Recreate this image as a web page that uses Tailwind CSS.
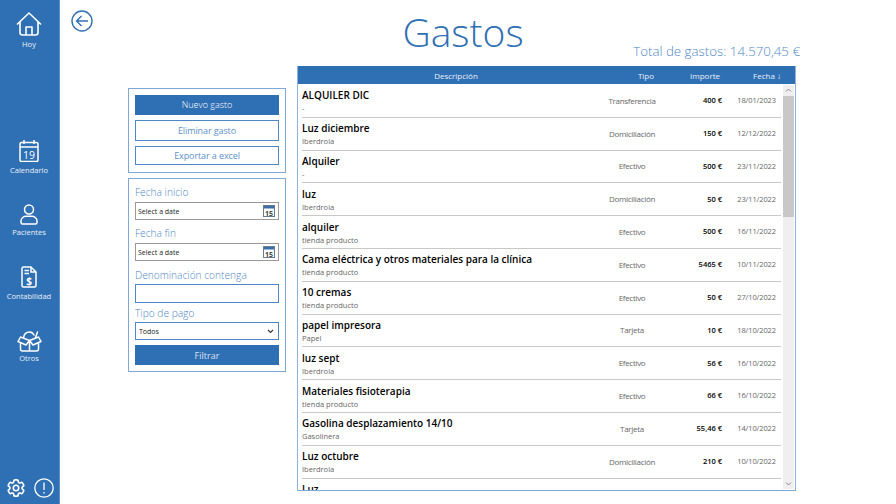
<!DOCTYPE html>
<html lang="es">
  <head>
    <meta charset="UTF-8" />
    <title>Gastos</title>
    <script src="https://cdn.jsdelivr.net/npm/@tailwindcss/browser@4"></script>
  </head>
  <body class="bg-white overflow-hidden font-['Open_Sans',sans-serif]">
    <div class="flex w-[896px] h-[504px]">
      <!-- sidebar -->
      <nav class="w-[60px] h-full shrink-0 bg-[#2f6fb4] border-r border-[#5a92cf] flex flex-col items-center text-white/90 text-[7.500px] leading-[10px] pr-px">
        <a class="mt-[12px] flex flex-col items-center">
          <svg width="26" height="24" viewBox="0 0 26 24" fill="none" stroke="white" stroke-width="1.600" stroke-linejoin="round"><path d="M1 12.500 13 1l12 11.500M4 10v10.500a2.500 2.500 0 0 0 2.500 2.500h13a2.500 2.500 0 0 0 2.500-2.500V10M10 23v-8h6v8"/></svg>
          <span class="mt-[3px]">Hoy</span>
        </a>
        <a class="mt-[91px] flex flex-col items-center">
          <svg width="20" height="22" viewBox="0 0 20 22" fill="none" stroke="white" stroke-width="1.500"><rect x="1" y="2.500" width="18" height="19" rx="1.500"/><path d="M1 7h18M5 0v4M15 0v4"/><text x="10" y="18.500" fill="white" stroke="none" font-size="10.500" text-anchor="middle" font-family="Open Sans">19</text></svg>
          <span class="mt-[3px]">Calendario</span>
        </a>
        <a class="mt-[29px] flex flex-col items-center">
          <svg width="18" height="21" viewBox="0 0 18 21" fill="none" stroke="white" stroke-width="1.500"><circle cx="9" cy="5.500" r="4.500"/><path d="M1 17c0-3 3-4.800 5-4.800h6c2 0 5 1.800 5 4.800v1.500a1.500 1.500 0 0 1-1.500 1.500h-13A1.500 1.500 0 0 1 1 18.500z"/></svg>
          <span class="mt-[2px]">Pacientes</span>
        </a>
        <a class="mt-[29px] flex flex-col items-center">
          <svg width="16" height="22" viewBox="0 0 16 22" fill="none" stroke="white" stroke-width="1.500"><path d="M2.500 1H10l5 5v13.500a1.500 1.500 0 0 1-1.500 1.500h-11A1.500 1.500 0 0 1 1 19.500v-17A1.500 1.500 0 0 1 2.500 1zM10 1v5h5M3.500 4.500H8M3.500 7.500H8"/><text x="8" y="18.500" fill="white" stroke="none" font-size="10" font-weight="700" text-anchor="middle" font-family="Open Sans">$</text></svg>
          <span class="mt-[3px]">Contabilidad</span>
        </a>
        <a class="mt-[30px] flex flex-col items-center">
          <svg width="25" height="21" viewBox="0 0 25 21" fill="none" stroke="white" stroke-width="1.500" stroke-linejoin="round" stroke-linecap="round"><path d="M6.500 6.500C7.200 3 9.500 1 12.500 1c2 0 3.500 1 4.500 3M18.500 6.500 20.500 1"/><path d="M12.500 9.500 3.500 6 1 10.500 9 14zM12.500 9.500l9-3.500 2.500 4.500-8 3.500zM3.500 12.500V18a2 2 0 0 0 2 2h14a2 2 0 0 0 2-2v-5.500M12.500 9.500V20"/></svg>
          <span class="mt-[1px]">Otros</span>
        </a>
        <div class="mt-auto mb-[6px] w-full pl-[7px] flex items-center gap-[9px]">
          <svg width="18" height="18" viewBox="2 2 20 20" fill="none" stroke="white" stroke-width="1.800" stroke-linejoin="round"><path d="M9.594 3.940c.09-.542.56-.94 1.110-.94h2.593c.55 0 1.020.398 1.110.94l.213 1.281c.063.374.313.686.645.870.074.040.147.083.220.127.325.196.720.257 1.075.124l1.217-.456a1.125 1.125 0 0 1 1.370.490l1.296 2.247a1.125 1.125 0 0 1-.260 1.431l-1.003.827c-.293.241-.438.613-.430.992a7.723 7.723 0 0 1 0 .255c-.008.378.137.750.430.991l1.004.827c.424.350.534.955.260 1.430l-1.298 2.247a1.125 1.125 0 0 1-1.369.491l-1.217-.456c-.355-.133-.750-.072-1.076.124a6.470 6.470 0 0 1-.220.128c-.331.183-.581.495-.644.869l-.213 1.281c-.09.543-.56.940-1.110.940h-2.594c-.55 0-1.019-.398-1.110-.940l-.213-1.281c-.062-.374-.312-.686-.644-.870a6.520 6.520 0 0 1-.220-.127c-.325-.196-.720-.257-1.076-.124l-1.217.456a1.125 1.125 0 0 1-1.369-.490l-1.297-2.247a1.125 1.125 0 0 1 .260-1.431l1.004-.827c.292-.240.437-.613.430-.991a6.932 6.932 0 0 1 0-.255c.007-.380-.138-.751-.430-.992l-1.004-.827a1.125 1.125 0 0 1-.260-1.430l1.297-2.247a1.125 1.125 0 0 1 1.370-.491l1.216.456c.356.133.751.072 1.076-.124.072-.044.146-.086.220-.128.332-.183.582-.495.644-.869l.214-1.280Z"/><circle cx="12" cy="12" r="3"/></svg>
          <svg width="20" height="20" viewBox="0 0 20 20" fill="none" stroke="white" stroke-width="1.300"><circle cx="10" cy="10" r="9.200"/><path d="M10 4.500v7.500M10 14v1.500"/></svg>
        </div>
      </nav>

      <!-- main -->
      <main class="flex-1 relative flex flex-col">
        <svg class="absolute left-[11px] top-[10px]" width="22" height="22" viewBox="0 0 22 22" fill="none" stroke="#2f6fb4" stroke-width="1.400"><circle cx="11" cy="11" r="10"/><path d="M17 11H6M10.500 6 5.500 11l5 5"/></svg>

        <h1 class="mt-[9px] h-[44px] pr-[30px] text-center text-[39px] leading-[46px] font-light text-[#2f6fb4]">Gastos</h1>
        <p class="-mt-[11px] pr-[96px] text-right text-[13.300px] leading-[18px] font-light text-[#4f87c6]">Total de gastos: 14.570,45 €</p>

        <div class="mt-[6px] flex">
          <!-- filters -->
          <div class="w-[158px] ml-[68px] mt-[22px] flex flex-col gap-[5px]">
            <section class="border border-[#7fa8d6] h-[85px] px-[6px] pt-[6px] flex flex-col gap-[5px] text-[9px] text-[#5b8fcb]">
              <button class="h-[20px] bg-[#2f6fb4] text-white font-light">Nuevo gasto</button>
              <button class="h-[21px] border border-[#4f87c6] tracking-[-0.1px]">Eliminar gasto</button>
              <button class="h-[19px] border border-[#4f87c6] tracking-[-0.1px]">Exportar a excel</button>
            </section>
            <section class="border border-[#7fa8d6] h-[194px] px-[6px] pt-[6px] flex flex-col text-[10.200px] leading-[15px] font-light text-[#4f87c6]">
              <label>Fecha inicio</label>
              <div class="mt-[2px] h-[18px] border border-[#9a9a9a] flex items-center justify-between pl-[2px] pr-[3px] text-[7px] font-normal text-[#222]">
                <span>Select a date</span>
                <svg width="12" height="12" viewBox="0 0 12 12"><rect x="0.500" y="0.500" width="11" height="11" fill="#fff" stroke="#6a7c90"/><rect x="1" y="1" width="10" height="2.500" fill="#3b6ea8"/><text x="6" y="10.500" font-size="7" font-weight="700" text-anchor="middle" fill="#444" font-family="Open Sans">15</text></svg>
              </div>
              <label class="mt-[6px]">Fecha fin</label>
              <div class="mt-[2px] h-[18px] border border-[#9a9a9a] flex items-center justify-between pl-[2px] pr-[3px] text-[7px] font-normal text-[#222]">
                <span>Select a date</span>
                <svg width="12" height="12" viewBox="0 0 12 12"><rect x="0.500" y="0.500" width="11" height="11" fill="#fff" stroke="#6a7c90"/><rect x="1" y="1" width="10" height="2.500" fill="#3b6ea8"/><text x="6" y="10.500" font-size="7" font-weight="700" text-anchor="middle" fill="#444" font-family="Open Sans">15</text></svg>
              </div>
              <label class="mt-[7px]">Denominación contenga</label>
              <div class="mt-[1px] h-[19px] border border-[#4f87c6]"></div>
              <label class="mt-[3px]">Tipo de pago</label>
              <div class="mt-[1px] h-[18px] border border-[#4f87c6] flex items-center justify-between pl-[3px] pr-[4px] text-[7px] font-normal text-[#222]">
                <span>Todos</span>
                <svg width="7" height="5" viewBox="0 0 7 5" fill="none" stroke="#333" stroke-width="1.100"><path d="m1 1 2.500 2.500L6 1"/></svg>
              </div>
              <button class="mt-[5px] h-[20px] bg-[#2f6fb4] text-white/80 text-[9px] font-normal">Filtrar</button>
            </section>
          </div>

          <!-- list -->
          <div class="ml-[11px] h-[425px] w-[499px] border border-[#2f6fb4] border-t-0 border-l-[#8db4de] border-r-[#8db4de] border-b-[#7fa8d6] flex flex-col overflow-hidden">
            <div class="h-[18px] -mx-px bg-[#2f6fb4] text-white/90 text-[8px] leading-[20px] flex shrink-0">
              <div class="w-[318px] text-center">Descripción</div>
              <div class="w-[62px] text-center">Tipo</div>
              <div class="w-[43px] text-right">Importe</div>
              <div class="w-[61px] text-right">Fecha ↓</div>
            </div>
            <div class="flex flex-1 min-h-0">
              <div id="rows" class="flex-1 pl-[4px] pt-[1px] overflow-hidden"></div>
              <div class="w-[11px] mt-[1px] mb-px mr-[1px] bg-[#efefef] flex flex-col items-center relative">
                <svg class="mt-[3px]" width="7" height="4" viewBox="0 0 7 4" fill="none" stroke="#888"><path d="m1 3.500 2.500-2.500L6 3.500"/></svg>
                <div class="absolute top-[11px] left-0 w-full h-[121px] bg-[#c8c8c8]"></div>
                <svg class="mt-auto mb-[3px]" width="7" height="4" viewBox="0 0 7 4" fill="none" stroke="#888"><path d="m1 .5 2.500 2.500L6 .5"/></svg>
              </div>
            </div>
          </div>
        </div>
      </main>
    </div>

    <script>
      const gastos = [
        ['ALQUILER DIC', '-', 'Transferencia', '400 €', '18/01/2023'],
        ['Luz diciembre', 'Iberdrola', 'Domiciliación', '150 €', '12/12/2022'],
        ['Alquiler', '-', 'Efectivo', '500 €', '23/11/2022'],
        ['luz', 'Iberdrola', 'Domiciliación', '50 €', '23/11/2022'],
        ['alquiler', 'tienda producto', 'Efectivo', '500 €', '16/11/2022'],
        ['Cama eléctrica y otros materiales para la clínica', 'tienda producto', 'Efectivo', '5465 €', '10/11/2022'],
        ['10 cremas', 'tienda producto', 'Efectivo', '50 €', '27/10/2022'],
        ['papel impresora', 'Papel', 'Tarjeta', '10 €', '18/10/2022'],
        ['luz sept', 'Iberdrola', 'Efectivo', '56 €', '16/10/2022'],
        ['Materiales fisioterapia', 'tienda producto', 'Efectivo', '66 €', '16/10/2022'],
        ['Gasolina desplazamiento 14/10', 'Gasolinera', 'Tarjeta', '55,46 €', '14/10/2022'],
        ['Luz octubre', 'Iberdrola', 'Domiciliación', '210 €', '10/10/2022'],
        ['Luz', '', '', '', ''],
      ];
      document.getElementById('rows').innerHTML = gastos.map((g) => `
        <div class="h-[32.800px] w-[479px] border-b border-[#c8c8c8] flex items-center shrink-0">
          <div class="w-[274px] pt-[1px]">
            <div class="text-[10px] leading-[14px] font-semibold text-black whitespace-nowrap">${g[0]}</div>
            <div class="text-[7.500px] leading-[12px] min-h-[12px] text-[#666]">${g[1]}</div>
          </div>
          <div class="w-[112px] text-center text-[8px] tracking-[-0.3px] text-[#666]">${g[2]}</div>
          <div class="w-[34px] text-right text-[7.500px] font-semibold text-black">${g[3]}</div>
          <div class="w-[59px] text-right pr-[5px] text-[7.500px] tracking-[-0.1px] text-[#666]">${g[4]}</div>
        </div>`).join('');
    </script>
  </body>
</html>
